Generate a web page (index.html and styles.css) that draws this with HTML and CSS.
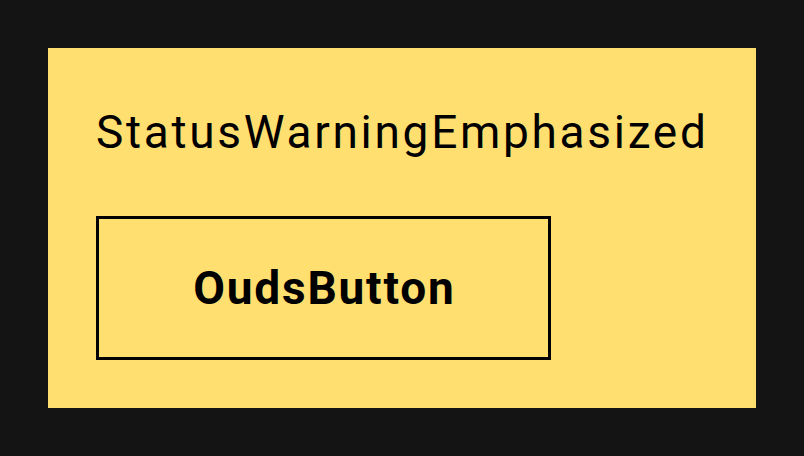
FILE: index.html
```html
<!DOCTYPE html>
<html>
<head>
<meta charset="utf-8">
<link rel="stylesheet" href="styles.css">
</head>
<body>
<div class="page">
  <div class="card">
    <div class="title">StatusWarningEmphasized</div>
    <div class="button">OudsButton</div>
  </div>
</div>
</body>
</html>
```
FILE: styles.css
```css
html, body {
  margin: 0;
  padding: 0;
  background: #141414;
}
.page {
  width: 804px;
  height: 456px;
  box-sizing: border-box;
  padding: 48px;
}
.card {
  width: 708px;
  height: 360px;
  box-sizing: border-box;
  background: #FFDF6F;
  padding: 48px;
  display: flex;
  flex-direction: column;
  align-items: flex-start;
  font-family: Roboto, "Liberation Sans", sans-serif;
  color: #000;
}
.title {
  font-size: 46px;
  line-height: 72px;
  height: 72px;
  letter-spacing: 2.7px;
}
.button {
  margin-top: 48px;
  width: 455px;
  height: 144px;
  box-sizing: border-box;
  border: 3px solid #000;
  display: flex;
  align-items: center;
  justify-content: center;
  font-size: 46px;
  font-weight: 700;
  letter-spacing: 1.8px;
  text-indent: 1.8px;
}
```
